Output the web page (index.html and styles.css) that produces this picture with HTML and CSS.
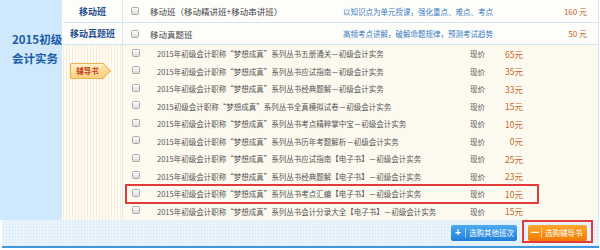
FILE: index.html
```html
<!DOCTYPE html>
<html lang="zh-CN">
<head>
<meta charset="utf-8">
<link rel="stylesheet" href="styles.css">
</head>
<body>
<div class="panel">
  <div class="main">
    <div class="subject">2015初级<br>会计实务</div>
    <div class="rows">
      <div class="row top r1">
        <div class="type type-name">移动班</div>
        <div class="content">
          <span class="cb"></span>
          <span class="name">移动班（移动精讲班+移动串讲班）</span>
          <span class="desc">以知识点为单元授课，强化重点、难点、考点</span>
          <span class="price">160 元</span>
        </div>
      </div>
      <div class="row top r2">
        <div class="type type-name">移动真题班</div>
        <div class="content">
          <span class="cb"></span>
          <span class="name">移动真题班</span>
          <span class="desc">高频考点讲解，破解命题规律，预测考试趋势</span>
          <span class="price">50 元</span>
        </div>
      </div>
      <div class="row books">
        <div class="type stripe"><span class="badge">辅导书</span></div>
        <div class="list">
          <div class="item"><span class="cb"></span><span class="title">2015年初级会计职称“梦想成真”系列丛书五册通关－初级会计实务</span><span class="lbl">现价</span><span class="amt">65元</span></div>
          <div class="item"><span class="cb"></span><span class="title">2015年初级会计职称“梦想成真”系列丛书应试指南－初级会计实务</span><span class="lbl">现价</span><span class="amt">35元</span></div>
          <div class="item"><span class="cb"></span><span class="title">2015年初级会计职称“梦想成真”系列丛书经典题解－初级会计实务</span><span class="lbl">现价</span><span class="amt">33元</span></div>
          <div class="item"><span class="cb"></span><span class="title">2015初级会计职称“梦想成真”系列丛书全真模拟试卷－初级会计实务</span><span class="lbl">现价</span><span class="amt">15元</span></div>
          <div class="item"><span class="cb"></span><span class="title">2015年初级会计职称“梦想成真”系列丛书考点精粹掌中宝－初级会计实务</span><span class="lbl">现价</span><span class="amt">10元</span></div>
          <div class="item"><span class="cb"></span><span class="title">2015年初级会计职称“梦想成真”系列丛书历年考题解析－初级会计实务</span><span class="lbl">现价</span><span class="amt">0元</span></div>
          <div class="item"><span class="cb"></span><span class="title">2015年初级会计职称“梦想成真”系列丛书应试指南【电子书】－初级会计实务</span><span class="lbl">现价</span><span class="amt">25元</span></div>
          <div class="item"><span class="cb"></span><span class="title">2015年初级会计职称“梦想成真”系列丛书经典题解【电子书】－初级会计实务</span><span class="lbl">现价</span><span class="amt">23元</span></div>
          <div class="item hl"><span class="cb"></span><span class="title">2015年初级会计职称“梦想成真”系列丛书考点汇编【电子书】－初级会计实务</span><span class="lbl">现价</span><span class="amt">10元</span></div>
          <div class="item"><span class="cb"></span><span class="title">2015年初级会计职称“梦想成真”系列丛书会计分录大全【电子书】－初级会计实务</span><span class="lbl">现价</span><span class="amt">15元</span></div>
        </div>
      </div>
    </div>
  </div>
  <div class="footer">
    <a class="btn btn-blue"><span class="ico">+</span><span class="sep"></span><span class="txt">选购其他班次</span></a>
    <span class="hlbox"><a class="btn btn-orange"><span class="ico">－</span><span class="sep"></span><span class="txt">选购辅导书</span></a></span>
  </div>
</div>
</body>
</html>
```

FILE: styles.css
```css
* { box-sizing: border-box; margin: 0; padding: 0; }
body {
  margin: 0;
  background: #fff;
  font-family: "Noto Sans CJK SC", "Liberation Sans", sans-serif;
}
.panel { width: 599px; }
.main {
  display: grid;
  grid-template-columns: 63px 1fr;
  height: 220px;
}
.subject {
  background: #cfe8fb;
  border-right: 1px solid #fff;
  color: #1b5aa6;
  font-weight: 700;
  font-size: 11.5px;
  line-height: 19px;
  padding: 30px 0 0 12px;
  white-space: nowrap;
}
.rows {
  display: flex;
  flex-direction: column;
  border-right: 1px solid #d6e4ee;
}
.row {
  display: grid;
  grid-template-columns: 60px 1fr;
}
.row .type { border-right: 1px solid #dbe6ee; }
.row.top {
  border-bottom: 1px solid #d6e4ef;
  background: #fdfdfa;
}
.row.r1 { height: 23px; }
.row.r2 { height: 22px; }
.type-name {
  display: flex;
  align-items: center;
  justify-content: center;
  font-size: 9px;
  font-weight: 700;
  color: #1f4f8f;
  white-space: nowrap;
}
.content {
  display: grid;
  grid-template-columns: 8px 204px 1fr auto;
  align-items: center;
  padding: 0 11px 0 8px;
}
.name {
  padding-left: 11px;
  font-size: 8.5px;
  color: #444;
  white-space: nowrap;
}
.desc {
  font-size: 7.5px;
  color: #3b7cc4;
  white-space: nowrap;
}
.price {
  font-size: 8px;
  color: #b8652e;
  white-space: nowrap;
}
.cb {
  display: block;
  width: 8px;
  height: 8px;
  border: 1px solid #aaa;
  border-radius: 1.5px;
  background: linear-gradient(#fff, #dadada);
}
.row.books { flex: 1; }
.stripe {
  background: repeating-linear-gradient(90deg, #f5edd8 0 1px, #fefbf2 1px 3px);
  padding: 10px 0 0 7px;
}
.badge {
  position: relative;
  display: inline-flex;
  align-items: center;
  justify-content: center;
  width: 34px;
  height: 16px;
  border: 1px solid #f0b04a;
  border-right: none;
  border-radius: 2px 0 0 2px;
  background: linear-gradient(#fff2cc, #fccf7c);
  color: #c2421a;
  font-size: 7.5px;
  font-weight: 700;
}
.badge::after {
  content: "";
  position: absolute;
  right: -5px;
  top: 2.5px;
  width: 9px;
  height: 9px;
  border-top: 1px solid #f0b04a;
  border-right: 1px solid #f0b04a;
  background: linear-gradient(135deg, #fde3a6, #fcd084);
  transform: rotate(45deg);
}
.list {
  background: #fcf9ef;
}
.item {
  display: grid;
  grid-template-columns: 8px 330px 15px 38px;
  align-items: center;
  height: 17.5px;
  width: 412px;
  margin-left: 3px;
  padding-left: 6px;
}
.item .cb { margin-bottom: 2px; }
.title {
  padding-left: 17px;
  font-size: 7.5px;
  color: #555;
  white-space: nowrap;
}
.lbl {
  font-size: 7.5px;
  color: #555;
  white-space: nowrap;
}
.amt {
  text-align: right;
  font-size: 8.5px;
  color: #c4672b;
  white-space: nowrap;
}
.item.hl {
  outline: 2px solid #e23b3b;
  outline-offset: -1px;
}
.footer {
  height: 28px;
  border-bottom: 2px solid #3f97de;
  background-color: #e8f3fb;
  background-image: radial-gradient(#d2e5f4 0.7px, transparent 0.9px);
  background-size: 3px 3px;
  display: flex;
  justify-content: flex-end;
  align-items: flex-start;
  padding-right: 6px;
  margin-left: 2px;
}
.btn {
  display: flex;
  align-items: center;
  height: 16px;
  border-radius: 2px;
  color: #fff;
  font-size: 7.5px;
  line-height: 16px;
  white-space: nowrap;
}
.btn-blue {
  width: 66px;
  margin-top: 5px;
  margin-right: 5px;
  background: linear-gradient(#4eaaf0, #1e7fd7);
}
.btn-orange {
  width: 59px;
  background: linear-gradient(#ffa72e, #f27900);
}
.ico {
  width: 14px;
  text-align: center;
  font-size: 10px;
  font-weight: 700;
  line-height: 16px;
  font-family: "Liberation Sans", sans-serif;
}
.btn-orange .ico { width: 13px; }
.sep {
  width: 1px;
  height: 10px;
  background: rgba(255, 255, 255, 0.55);
}
.txt { padding-left: 3px; }
.hlbox {
  display: flex;
  align-items: flex-start;
  height: 23px;
  border: 2px solid #e23b3b;
  padding: 3px 4px 0;
}
```
